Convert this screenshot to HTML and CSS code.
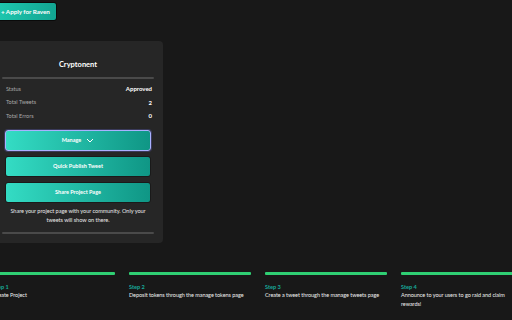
FILE: index.html
```html
<!DOCTYPE html>
<html>
<head>
  <meta charset="utf-8">
  <title>Raven</title>
  <link rel="stylesheet" href="styles.css">
</head>
<body>
<div class="page">
  <button class="btn-apply">+ Apply for Raven</button>

  <div class="card">
    <h2 class="card-title">Cryptonent</h2>
    <div class="rule"></div>
    <dl class="stats">
      <div class="stat"><dt>Status</dt><dd>Approved</dd></div>
      <div class="stat"><dt>Total Tweets</dt><dd>2</dd></div>
      <div class="stat"><dt>Total Errors</dt><dd>0</dd></div>
    </dl>
    <div class="actions">
      <button class="btn btn-focus">Manage
        <svg class="chev" width="8" height="5" viewBox="0 0 8 5"><path d="M1 1l3 3 3-3" fill="none" stroke="#fff" stroke-width="1"/></svg>
      </button>
      <button class="btn">Quick Publish Tweet</button>
      <button class="btn">Share Project Page</button>
    </div>
    <p class="note">Share your project page with your community. Only your tweets will show on there.</p>
    <div class="rule"></div>
  </div>

  <div class="steps">
    <div class="step"><div class="bar"></div><h3>Step 1</h3><p>Create Project</p></div>
    <div class="step"><div class="bar"></div><h3>Step 2</h3><p>Deposit tokens through the manage tokens page</p></div>
    <div class="step"><div class="bar"></div><h3>Step 3</h3><p>Create a tweet through the manage tweets page</p></div>
    <div class="step"><div class="bar"></div><h3>Step 4</h3><p>Announce to your users to go raid and claim rewards!</p></div>
  </div>
</div>
</body>
</html>
```

FILE: styles.css
```css
html,body{margin:0;padding:0;}
body{background:#181818;color:#fff;font-family:"Lato","Liberation Sans",sans-serif;font-size:6px;overflow:hidden;}
.page{margin-left:-7px;padding-top:2px;width:560px;}
button{font-family:inherit;color:#fff;cursor:pointer;}

.btn-apply{display:block;height:19px;padding:0 6px 0 7px;border:1px solid #0a0a0a;border-radius:3px;background:linear-gradient(90deg,#1fc9b0,#12a592);font-size:6.3px;font-weight:700;letter-spacing:-0.05px;}

.card{width:170px;box-sizing:border-box;margin-top:20px;padding:18px 9px 9px;background:#262626;border-radius:4px;}
.card-title{margin:0;text-align:center;font-size:7.5px;line-height:12px;font-weight:700;}
.rule{height:2px;border-radius:1px;background:#4a4a4a;margin-top:6px;}
.stats{margin:3px 0 0;padding:0;}
.stat{display:flex;justify-content:space-between;align-items:center;height:13.5px;padding:0 2px 0 4px;}
.stat dt{color:#a8a8a8;font-size:5.5px;}
.stat dd{margin:0;font-weight:700;font-size:6px;}

.actions{display:flex;flex-direction:column;gap:5px;margin:7px 3px 0;}
.btn{height:21px;border:1px solid #1a1a1a;border-radius:3px;background:linear-gradient(90deg,#34dcc4,#0f9685);font-size:5.5px;font-weight:700;display:flex;align-items:center;justify-content:center;gap:5px;}
.btn-focus{border:1px solid #aab0ff;box-shadow:0 0 0 1px #3a3a5a;}
.chev{display:block;}

.note{margin:3px 0 0;text-align:center;font-size:5.6px;line-height:9px;color:#e6e6e6;letter-spacing:-0.05px;}
.card .rule:last-child{margin-top:8px;}

.steps{display:grid;grid-template-columns:repeat(4,122px);column-gap:14px;margin-top:29px;}
.bar{height:3px;background:#2fcf73;border-radius:1px;}
.step h3{margin:7px 0 0;color:#17a99a;font-size:5.6px;font-weight:700;line-height:9px;}
.step p{margin:0;font-size:5.5px;line-height:9px;color:#f0f0f0;letter-spacing:-0.05px;}
```
